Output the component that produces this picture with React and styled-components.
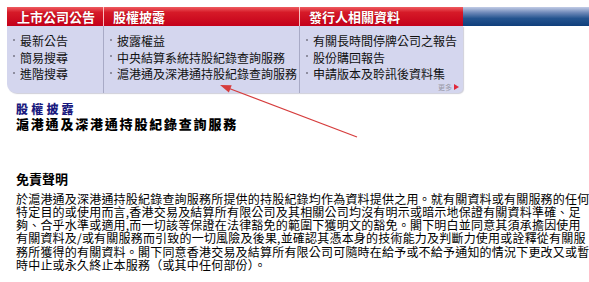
import React from 'react'
import styled, { createGlobalStyle } from 'styled-components';

const GlobalStyle = createGlobalStyle`
  body {
    margin: 0;
    background: #ffffff;
    font-family: "Noto Sans CJK TC", "Noto Sans CJK SC", sans-serif;
    color: #000;
  }
`;

const Page = styled.div`
  position: relative;
  padding: 7px 0 0 7px;
`;

const TopBar = styled.div`
  display: flex;
  align-items: flex-start;
`;

const MenuBox = styled.div`
  width: 456px;
  flex-shrink: 0;
`;

const COLS = '96px 196px 164px';

const TabRow = styled.div`
  display: grid;
  grid-template-columns: ${COLS};
  height: 19px;
  background: linear-gradient(to bottom, #ee5c60 0%, #d61a28 28%, #c4001a 100%);
`;

const Tab = styled.div`
  display: flex;
  align-items: center;
  padding-left: ${({ $pad }) => $pad}px;
  border-left: ${({ $first }) => ($first ? 'none' : '1px solid rgba(255, 220, 220, 0.85)')};
  color: #fff;
  font-size: 13px;
  font-weight: 700;
  line-height: 19px;
  text-shadow: 0 0 1px rgba(120, 0, 0, 0.6);
`;

const Panel = styled.div`
  display: grid;
  grid-template-columns: ${COLS};
  background: #d4d6ee;
  border-radius: 0 0 5px 9px;
  box-shadow: 1px 1px 1px rgba(120, 120, 150, 0.35);
`;

const Column = styled.div`
  display: flex;
  flex-direction: column;
  padding: 7px 0 ${({ $more }) => ($more ? 2 : 10)}px 5px;
  border-left: ${({ $first }) => ($first ? 'none' : '1px solid #a8aac6')};
`;

const Item = styled.div`
  display: flex;
  align-items: center;
  font-size: 12px;
  line-height: 16.5px;
  color: #111;
  white-space: nowrap;
`;

const Bullet = styled.span`
  flex: 0 0 2px;
  height: 2px;
  margin: -3px 5px 0 1px;
  background: #8e8ea0;
`;

const MoreLink = styled.div`
  align-self: flex-end;
  display: flex;
  align-items: center;
  gap: 2px;
  margin: 0 4px 0 0;
  font-size: 7px;
  line-height: 8px;
  color: #9a9aa8;
`;

const MoreArrow = styled.span`
  width: 0;
  height: 0;
  border-top: 3px solid transparent;
  border-bottom: 3px solid transparent;
  border-left: 5px solid #e0283a;
`;

const BlueStrip = styled.div`
  flex: 1;
  height: 19px;
  background: linear-gradient(to bottom, #c2cce6 0%, #6d88b8 30%, #24548f 60%, #103f7c 100%);
`;

const Content = styled.div`
  padding: 9px 9px 0 9px;
`;

const Category = styled.div`
  font-size: 12px;
  font-weight: 900;
  line-height: 14px;
  letter-spacing: 3.2px;
  color: #1a1a7e;
`;

const ServiceTitle = styled.div`
  font-size: 13px;
  font-weight: 900;
  line-height: 15px;
  letter-spacing: 1.8px;
  color: #000;
`;

const SectionTitle = styled.div`
  margin-top: 40px;
  font-size: 13px;
  font-weight: 700;
  line-height: 15px;
`;

const Paragraph = styled.p`
  margin: 6px 0 0 0;
  font-size: 12px;
  line-height: 13.3px;
  letter-spacing: 0.2px;
  color: #000;
  white-space: nowrap;
`;

const ArrowLayer = styled.svg`
  position: absolute;
  left: 0;
  top: 0;
  pointer-events: none;
`;

const tabs = [
  { label: '上市公司公告', pad: 10 },
  { label: '股權披露', pad: 9 },
  { label: '發行人相關資料', pad: 9 },
];

const columns = [
  ['最新公告', '簡易搜尋', '進階搜尋'],
  ['披露權益', '中央結算系統持股紀錄查詢服務', '滬港通及深港通持股紀錄查詢服務'],
  ['有關長時間停牌公司之報告', '股份購回報告', '申請版本及聆訊後資料集'],
];

const lines = [
  '於滬港通及深港通持股紀錄查詢服務所提供的持股紀錄均作為資料提供之用。就有關資料或有關服務的任何',
  '特定目的或使用而言,香港交易及結算所有限公司及其相關公司均沒有明示或暗示地保證有關資料準確、足',
  '夠、合乎水準或適用,而一切該等保證在法律豁免的範圍下獲明文的豁免。閣下明白並同意其須承擔因使用',
  '有關資料及/或有關服務而引致的一切風險及後果,並確認其憑本身的技術能力及判斷力使用或詮釋從有關服',
  '務所獲得的有關資料。閣下同意香港交易及結算所有限公司可隨時在給予或不給予通知的情況下更改又或暫',
  '時中止或永久終止本服務（或其中任何部份）。',
];

export default function App() {
  return (
    <Page>
      <GlobalStyle />
      <TopBar>
        <MenuBox>
          <TabRow>
            {tabs.map((t, i) => (
              <Tab key={t.label} $first={i === 0} $pad={t.pad}>{t.label}</Tab>
            ))}
          </TabRow>
          <Panel>
            {columns.map((col, i) => (
              <Column key={i} $first={i === 0} $more={i === 2}>
                {col.map((label) => (
                  <Item key={label}>
                    <Bullet />
                    {label}
                  </Item>
                ))}
                {i === 2 && (
                  <MoreLink>
                    更多
                    <MoreArrow />
                  </MoreLink>
                )}
              </Column>
            ))}
          </Panel>
        </MenuBox>
        <BlueStrip />
      </TopBar>

      <Content>
        <Category>股權披露</Category>
        <ServiceTitle>滬港通及深港通持股紀錄查詢服務</ServiceTitle>
        <SectionTitle>免責聲明</SectionTitle>
        <Paragraph>
          {lines.map((line, i) => (
            <React.Fragment key={i}>
              {line}
              {i < lines.length - 1 && <br />}
            </React.Fragment>
          ))}
        </Paragraph>
      </Content>

      <ArrowLayer width="589" height="282" viewBox="0 0 589 282">
        <line x1="357" y1="137" x2="228" y2="88" stroke="#d63c3c" strokeWidth="1.3" />
        <polygon points="220,85 231.7,85.2 228.9,92.6" fill="#d63c3c" />
      </ArrowLayer>
    </Page>
  );
}
